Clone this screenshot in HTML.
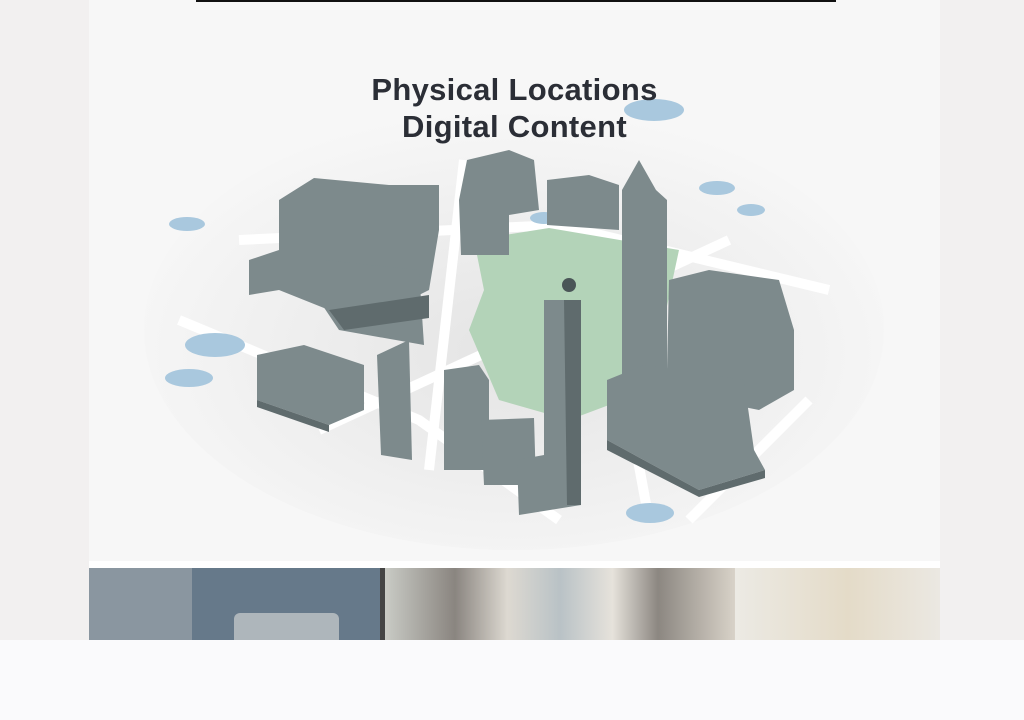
<!DOCTYPE html>
<html><head><style>
html,body{margin:0;padding:0}
body{width:1024px;height:720px;background:#f2f0f0;position:relative;overflow:hidden;font-family:"Liberation Sans",sans-serif}
.panel{position:absolute;left:89px;top:0;width:851px;height:561px;background:#f7f7f7}
.gap{position:absolute;left:89px;top:561px;width:851px;height:7px;background:#fff}
.topline{position:absolute;left:196px;top:0;width:640px;height:2px;background:#111}
.strip{position:absolute;left:89px;top:568px;width:851px;height:72px;overflow:hidden}
.bottom{position:absolute;left:0;top:640px;width:1024px;height:80px;background:#fafafc}
h1{position:absolute;left:0;width:851px;top:71px;margin:0;text-align:center;font-size:31px;line-height:37px;font-weight:bold;color:#2b2e36;letter-spacing:0.3px}
</style></head><body>
<div class="panel">
<svg width="851" height="561" style="position:absolute;left:0;top:0">
 <defs><radialGradient id="g" cx="50%" cy="55%" r="55%"><stop offset="0" stop-color="#e4e4e4"/><stop offset="1" stop-color="#f7f7f7"/></radialGradient></defs>
 <ellipse cx="425" cy="330" rx="370" ry="220" fill="url(#g)"/>
 <g stroke="#fff" stroke-width="10" fill="none">
  <path d="M90 320 L330 420 L470 520"/><path d="M150 240 L470 225 L740 290"/>
  <path d="M375 160 L340 470"/><path d="M510 250 L560 520"/><path d="M230 430 L640 240"/>
  <path d="M600 520 L720 400"/>
 </g>
 <polygon points="385,240 460,228 590,250 560,390 480,420 410,400 380,330 395,290" fill="#b3d3b8"/>
 <circle cx="480" cy="285" r="7" fill="#4a5557"/>
 <g fill="#a9c8de">
  <ellipse cx="98" cy="224" rx="18" ry="7"/><ellipse cx="126" cy="345" rx="30" ry="12"/><ellipse cx="100" cy="378" rx="24" ry="9"/>
  <ellipse cx="628" cy="188" rx="18" ry="7"/><ellipse cx="662" cy="210" rx="14" ry="6"/><ellipse cx="561" cy="513" rx="24" ry="10"/><ellipse cx="565" cy="110" rx="30" ry="11"/><ellipse cx="455" cy="218" rx="14" ry="6"/>
 </g>
 <g fill="#7d8a8c">
  <polygon points="190,200 225,178 300,185 350,185 350,230 340,290 300,310 240,310 190,290 160,295 160,260 190,250"/>
  <polygon points="235,260 330,270 335,345 250,330 230,300"/>
  <polygon points="168,355 215,345 275,365 275,410 240,425 168,400"/>
  <polygon points="288,355 320,340 323,460 292,455"/>
  <polygon points="378,160 420,150 445,160 450,210 420,215 420,255 372,255 370,200"/>
  <polygon points="458,180 500,175 530,185 530,230 458,225"/>
  <polygon points="355,370 390,365 400,380 400,470 355,470"/>
  <polygon points="392,420 445,418 447,485 395,485"/>
  <polygon points="455,300 490,300 492,505 430,515 428,460 455,455"/>
  <polygon points="533,190 550,160 567,190 578,200 578,380 533,385"/>
  <polygon points="580,280 620,270 690,280 705,330 705,390 670,410 620,400 578,370"/>
  <polygon points="518,380 555,365 655,380 665,450 676,470 610,490 518,440"/>
 </g>
 <g fill="#5f6b6d">
  <polygon points="240,310 340,295 340,318 255,330"/><polygon points="475,300 492,300 492,505 478,505"/>
  <polygon points="518,440 610,490 676,470 676,478 610,497 518,450"/>
  <polygon points="168,400 240,425 240,432 168,407"/>
 </g>
</svg>
<h1>Physical Locations<br>Digital Content</h1>
</div>
<div class="topline"></div>
<div class="gap"></div>
<div class="strip">
 <div style="position:absolute;left:0;top:0;width:103px;height:72px;background:#8a96a0"></div>
 <div style="position:absolute;left:103px;top:0;width:188px;height:72px;background:#66798a"></div>
 <div style="position:absolute;left:145px;top:45px;width:105px;height:27px;background:#aeb6bb;border-radius:6px 6px 0 0"></div>
 <div style="position:absolute;left:291px;top:0;width:5px;height:72px;background:#444"></div>
 <div style="position:absolute;left:296px;top:0;width:350px;height:72px;background:linear-gradient(90deg,#c9cbc5,#8a8580 20%,#ddd9d1 35%,#b9c2c6 50%,#e6e2db 65%,#8c8781 78%,#d8d2c8)"></div>
 <div style="position:absolute;left:646px;top:0;width:205px;height:72px;background:linear-gradient(90deg,#eceae4,#e4dbc8 55%,#ebe8e2)"></div>
</div>
<div class="bottom"></div>
</body></html>
